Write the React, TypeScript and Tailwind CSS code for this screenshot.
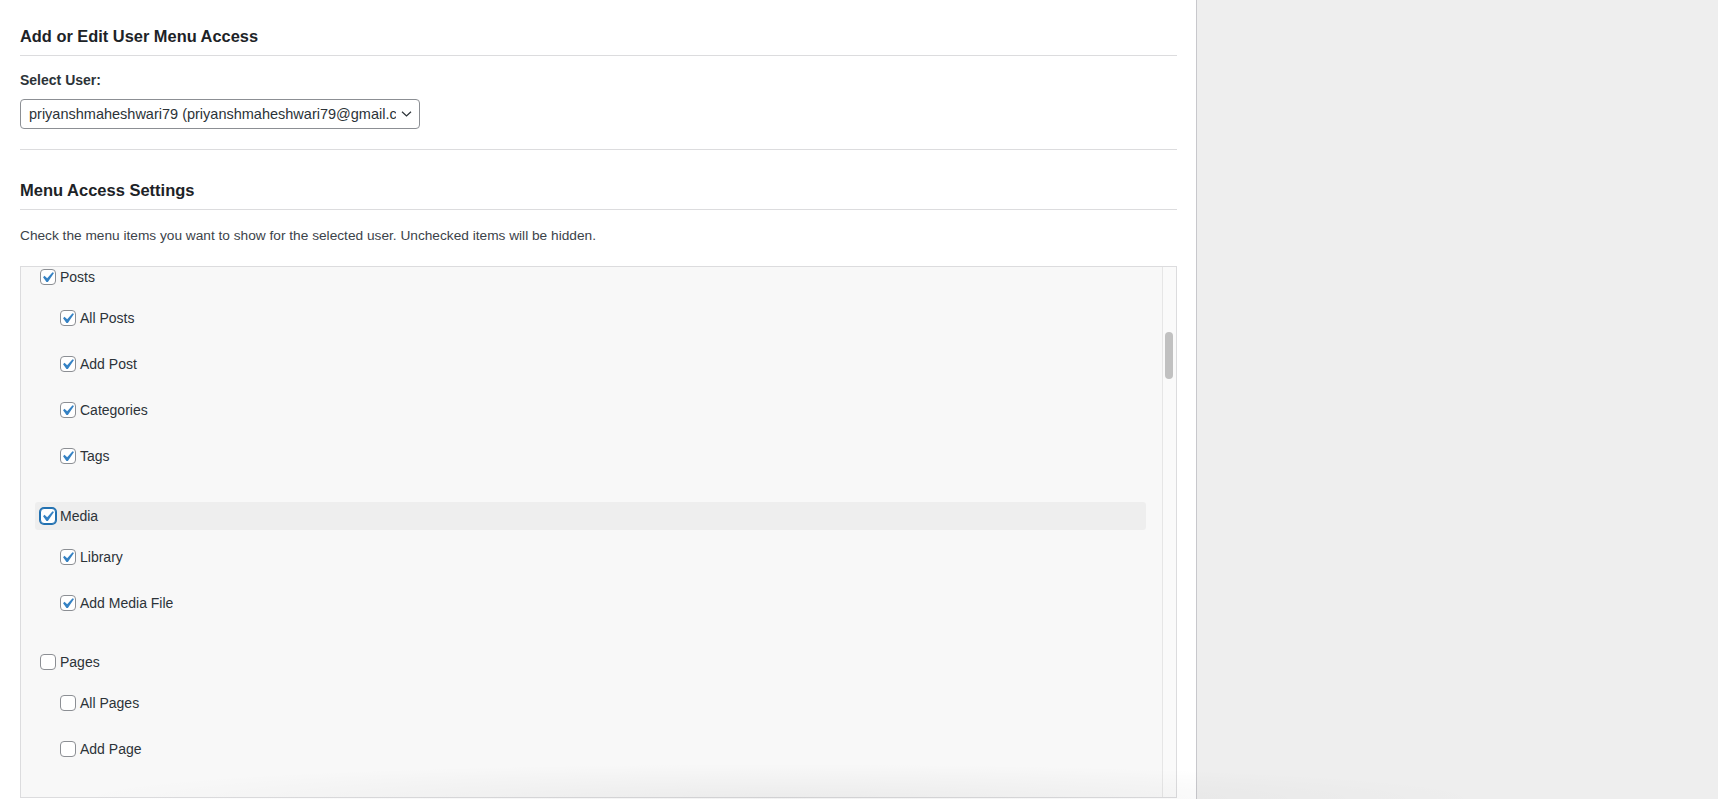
import React from "react";

type Sub = { label: string; checked: boolean };
type Group = { label: string; checked: boolean; focused?: boolean; hovered?: boolean; children: Sub[] };

const groups: Group[] = [
  {
    label: "Posts",
    checked: true,
    children: [
      { label: "All Posts", checked: true },
      { label: "Add Post", checked: true },
      { label: "Categories", checked: true },
      { label: "Tags", checked: true },
    ],
  },
  {
    label: "Media",
    checked: true,
    focused: true,
    hovered: true,
    children: [
      { label: "Library", checked: true },
      { label: "Add Media File", checked: true },
    ],
  },
  {
    label: "Pages",
    checked: false,
    children: [
      { label: "All Pages", checked: false },
      { label: "Add Page", checked: false },
    ],
  },
];

function Checkbox({ checked, focused }: { checked: boolean; focused?: boolean }) {
  return (
    <span
      className={
        focused
          ? "relative inline-block h-4 w-4 shrink-0 rounded-[4px] border border-[#2271b1] bg-white shadow-[0_0_0_1px_#2271b1]"
          : "relative inline-block h-4 w-4 shrink-0 rounded-[4px] border border-[#8c8f94] bg-white"
      }
    >
      {checked && (
        <svg className="absolute left-[-4px] top-[-3px] h-[21px] w-[21px]" viewBox="0 0 20 20">
          <path d="M14.83 4.89l1.34.94-5.81 8.38H9.02L5.78 9.67l1.34-1.25 2.57 2.4z" fill="#3582c4" />
        </svg>
      )}
    </span>
  );
}

export default function App() {
  return (
    <div className="relative flex h-[799px] w-full overflow-hidden bg-[#eeeeee] font-['Liberation_Sans',Arial,sans-serif]">
      <div className="h-full w-[1197px] shrink-0 border-r border-[#c8c8cc] bg-white pl-[20px] pr-[19px] pt-[25px]">
        <h2 className="border-b border-[#dcdcde] pb-[8px] text-[16.4px] font-bold leading-[22px] text-[#1d2327]">
          Add or Edit User Menu Access
        </h2>
        <div className="mt-[14px] text-[14px] font-bold leading-[20px] text-[#2c3338]">Select User:</div>
        <div className="mt-[9px] flex h-[30px] w-[400px] items-center rounded-[4px] border border-[#8c8f94] bg-white pl-[8px] pr-[7px]">
          <div className="flex-1 overflow-hidden whitespace-nowrap text-[14.5px] leading-[20px] text-[#2c3338]">
            priyanshmaheshwari79 (priyanshmaheshwari79@gmail.com)
          </div>
          <svg className="ml-[5px] h-[6px] w-[11px] shrink-0" viewBox="0 0 11 6">
            <polyline points="1,0.8 5.5,5 10,0.8" fill="none" stroke="#2c3338" strokeWidth="1.2" />
          </svg>
        </div>
        <div className="mt-[20px] h-px bg-[#dcdcde]" />
        <h2 className="mt-[29px] border-b border-[#dcdcde] pb-[8px] text-[16.5px] font-bold leading-[22px] text-[#1d2327]">
          Menu Access Settings
        </h2>
        <p className="mt-[17px] text-[13.7px] leading-[18px] text-[#3c434a]">
          Check the menu items you want to show for the selected user. Unchecked items will be hidden.
        </p>
        <div className="mt-[21px] flex h-[532px] overflow-hidden border border-[#dcdcde] bg-[#f8f8f8]">
          <div className="flex-1 overflow-hidden pl-[14px] pr-[16px]">
            <div className="-mt-[4px] flex flex-col">
              {groups.map((g, i) => (
                <div key={g.label} className={i === 0 ? "mb-[32px]" : "mb-[31px]"}>
                  <label
                    className={
                      g.hovered
                        ? "flex h-7 items-center gap-1 rounded-[3px] bg-[#eeeeee] px-[5px] text-[14px] text-[#2c3338]"
                        : "flex h-7 items-center gap-1 rounded-[3px] px-[5px] text-[14px] text-[#2c3338]"
                    }
                  >
                    <Checkbox checked={g.checked} focused={g.focused} />
                    <span>{g.label}</span>
                  </label>
                  <div className="mt-[13px] flex flex-col gap-[18px] pl-[25px]">
                    {g.children.map((c) => (
                      <label key={c.label} className="flex h-7 items-center gap-1 text-[14px] text-[#2c3338]">
                        <Checkbox checked={c.checked} />
                        <span>{c.label}</span>
                      </label>
                    ))}
                  </div>
                </div>
              ))}
            </div>
          </div>
          <div className="w-[14px] shrink-0 border-l border-[#e6e6e6] bg-[#fafafa]">
            <div className="ml-[2px] mt-[65px] h-[47px] w-[8px] rounded-full bg-[#c1c1c1]" />
          </div>
        </div>
      </div>
      <div className="flex-1 bg-[#eeeeee]" />
      <div className="pointer-events-none absolute bottom-0 left-[60px] h-[36px] w-[1440px] bg-[radial-gradient(ellipse_at_bottom,rgba(0,0,0,0.05),rgba(0,0,0,0)_70%)]" />
    </div>
  );
}
